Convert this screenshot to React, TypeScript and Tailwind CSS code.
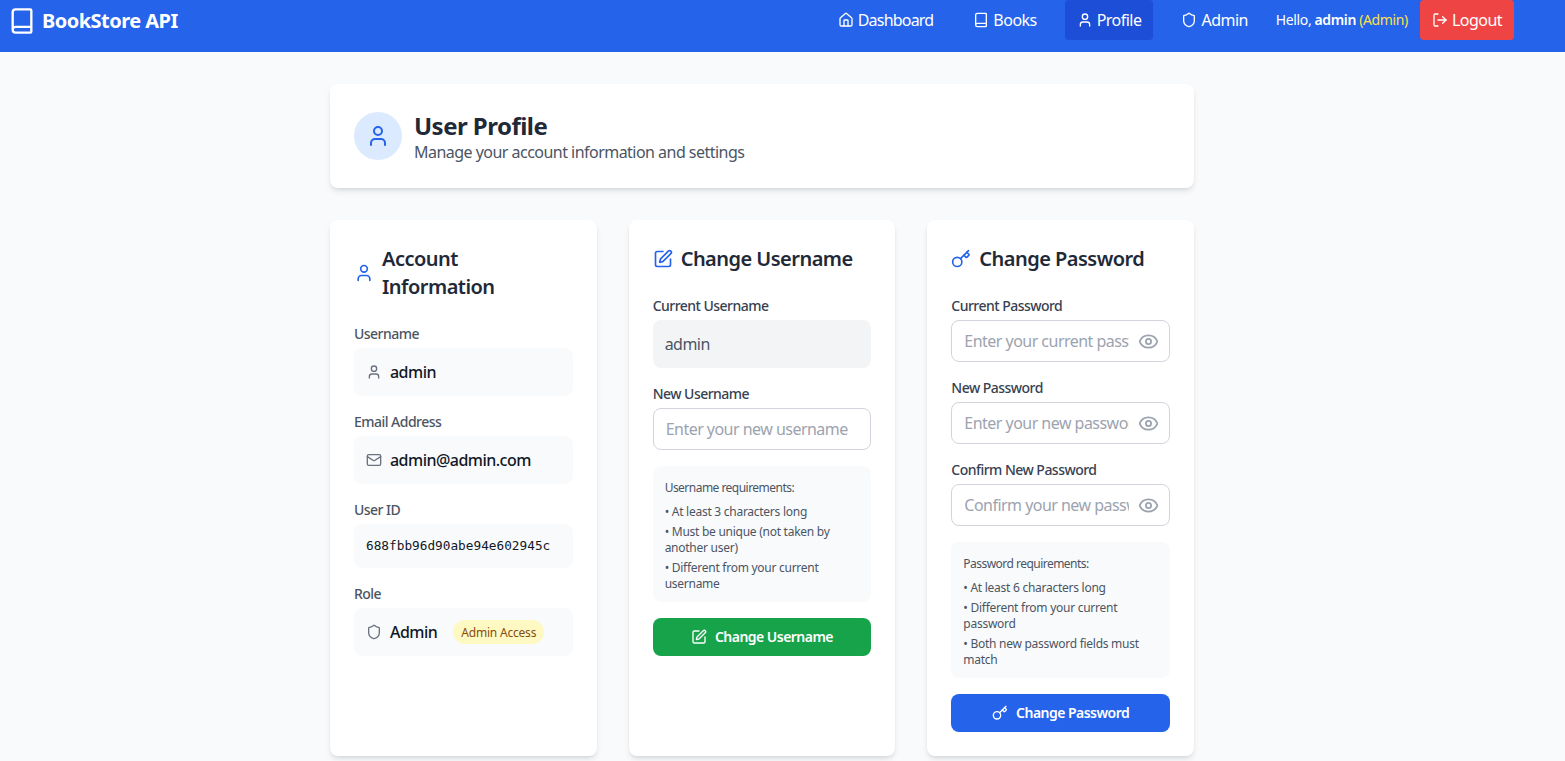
import React from 'react';
import { Book, Eye, House, Key, LogOut, Mail, Shield, SquarePen, User } from 'lucide-react';

const NavItem = ({ icon: Icon, label, active, tight }: { icon: typeof User; label: string; active?: boolean; tight?: boolean }) => (
  <a className={`flex items-center h-10 px-3 gap-1 rounded text-white ${active ? 'bg-[#1d4ed8]' : ''}`}>
    <Icon className="w-4 h-4" />
    <span className={tight ? 'tracking-[-0.05em]' : ''}>{label}</span>
  </a>
);

const CardTitle = ({ icon: Icon, children }: { icon: typeof User; children: React.ReactNode }) => (
  <h2 className="flex items-center gap-2 mb-[23px] text-xl font-semibold text-[#1f2937]">
    <Icon className="w-5 h-5 shrink-0 text-[#2563eb]" />
    <span className="pt-px">{children}</span>
  </h2>
);

const InfoRow = ({ label, children }: { label: string; children: React.ReactNode }) => (
  <div>
    <div className="mb-1 text-sm font-medium text-[#4b5563]">{label}</div>
    <div className="flex items-center gap-2 p-3 bg-[#f9fafb] rounded-lg">{children}</div>
  </div>
);

const PasswordField = ({ label, placeholder }: { label: string; placeholder: string }) => (
  <div>
    <label className="block mb-1 text-sm font-medium text-[#374151]">{label}</label>
    <div className="relative">
      <input
        type="password"
        placeholder={placeholder}
        className="w-full px-3 py-2 pr-10 border border-[#d1d5db] rounded-lg placeholder:text-[#9ca3af]"
      />
      <Eye className="absolute right-[11px] top-[11px] w-[21px] h-[21px] text-[#9ca3af]" />
    </div>
  </div>
);

const Requirements = ({ title, items }: { title: string; items: string[] }) => (
  <div className="px-3 pt-[14px] pb-[10px] bg-[#f9fafb] rounded-lg text-xs text-[#4b5563]">
    <p className="mb-2">{title}</p>
    <ul className="space-y-1 tracking-[-0.022em]">
      {items.map((item) => (
        <li key={item}>• {item}</li>
      ))}
    </ul>
  </div>
);

export default function App() {
  return (
    <div className="min-h-screen bg-[#f9fafb] font-['Noto_Sans',sans-serif] tracking-[-0.033em]">
      <nav className="flex justify-between h-[52px] pl-2 pr-[51px] bg-[#2563eb]">
        <div className="flex items-center h-10 gap-1.5 pt-0.5 text-white">
          <Book className="w-7 h-7" />
          <span className="text-xl font-bold">BookStore API</span>
        </div>
        <div className="flex items-center h-10 gap-4">
          <NavItem icon={House} label="Dashboard" tight />
          <NavItem icon={Book} label="Books" />
          <NavItem icon={User} label="Profile" active />
          <NavItem icon={Shield} label="Admin" />
          <span className="text-sm tracking-[-0.027em] text-white">
            Hello, <span className="font-semibold">admin</span> <span className="text-[#fde047]">(Admin)</span>
          </span>
          <button className="flex items-center h-10 -ml-1 px-3 gap-1 bg-[#ef4444] rounded text-white">
            <LogOut className="w-4 h-4" />
            Logout
          </button>
        </div>
      </nav>

      <div className="pr-[41px]">
        <main className="max-w-4xl mx-auto px-4 py-8">
          <section className="flex items-center gap-3 p-6 mb-8 bg-white rounded-lg shadow-md">
            <div className="flex items-center justify-center w-12 h-12 bg-[#dbeafe] rounded-full">
              <User className="w-6 h-6 text-[#2563eb]" />
            </div>
            <div>
              <h1 className="pt-0.5 -mb-0.5 text-2xl font-bold text-[#1f2937]">User Profile</h1>
              <p className="text-[#4b5563]">Manage your account information and settings</p>
            </div>
          </section>

          <div className="grid grid-cols-3 gap-8">
            <section className="p-6 bg-white rounded-lg shadow-md">
              <CardTitle icon={User}>Account Information</CardTitle>
              <div className="space-y-4">
                <InfoRow label="Username">
                  <User className="w-4 h-4 text-[#6b7280]" />
                  <span className="font-medium text-[#111827]">admin</span>
                </InfoRow>
                <InfoRow label="Email Address">
                  <Mail className="w-4 h-4 text-[#6b7280]" />
                  <span className="font-medium text-[#111827]">admin@admin.com</span>
                </InfoRow>
                <InfoRow label="User ID">
                  <span className="font-['DejaVu_Sans_Mono',monospace] text-[12.75px] leading-5 tracking-normal text-[#111827]">
                    688fbb96d90abe94e602945c
                  </span>
                </InfoRow>
                <InfoRow label="Role">
                  <Shield className="w-4 h-4 text-[#6b7280]" />
                  <span className="font-medium text-[#111827]">Admin</span>
                  <span className="ml-2 px-2 pt-[5px] pb-[3px] bg-[#fef9c3] rounded-full text-xs tracking-[-0.017em] text-[#854d0e]">Admin Access</span>
                </InfoRow>
              </div>
            </section>

            <section className="p-6 bg-white rounded-lg shadow-md">
              <CardTitle icon={SquarePen}>Change Username</CardTitle>
              <div className="space-y-4">
                <div>
                  <label className="block mb-1 text-sm font-medium text-[#374151]">Current Username</label>
                  <div className="p-3 bg-[#f3f4f6] rounded-lg text-[#4b5563]">admin</div>
                </div>
                <div>
                  <label className="block mb-1 text-sm font-medium text-[#374151]">New Username</label>
                  <input
                    placeholder="Enter your new username"
                    className="w-full px-3 py-2 border border-[#d1d5db] rounded-lg placeholder:text-[#9ca3af]"
                  />
                </div>
                <Requirements
                  title="Username requirements:"
                  items={['At least 3 characters long', 'Must be unique (not taken by another user)', 'Different from your current username']}
                />
                <button className="flex items-center justify-center w-full h-[38px] gap-2 bg-[#16a34a] rounded-lg text-sm font-semibold text-white">
                  <SquarePen className="w-4 h-4" />
                  Change Username
                </button>
              </div>
            </section>

            <section className="p-6 bg-white rounded-lg shadow-md">
              <CardTitle icon={Key}>Change Password</CardTitle>
              <div className="space-y-4">
                <PasswordField label="Current Password" placeholder="Enter your current password" />
                <PasswordField label="New Password" placeholder="Enter your new password" />
                <PasswordField label="Confirm New Password" placeholder="Confirm your new password" />
                <Requirements
                  title="Password requirements:"
                  items={['At least 6 characters long', 'Different from your current password', 'Both new password fields must match']}
                />
                <button className="flex items-center justify-center w-full h-[38px] gap-2 bg-[#2563eb] rounded-lg text-sm font-semibold text-white">
                  <Key className="w-4 h-4" />
                  Change Password
                </button>
              </div>
            </section>
          </div>
        </main>
      </div>
    </div>
  );
}
